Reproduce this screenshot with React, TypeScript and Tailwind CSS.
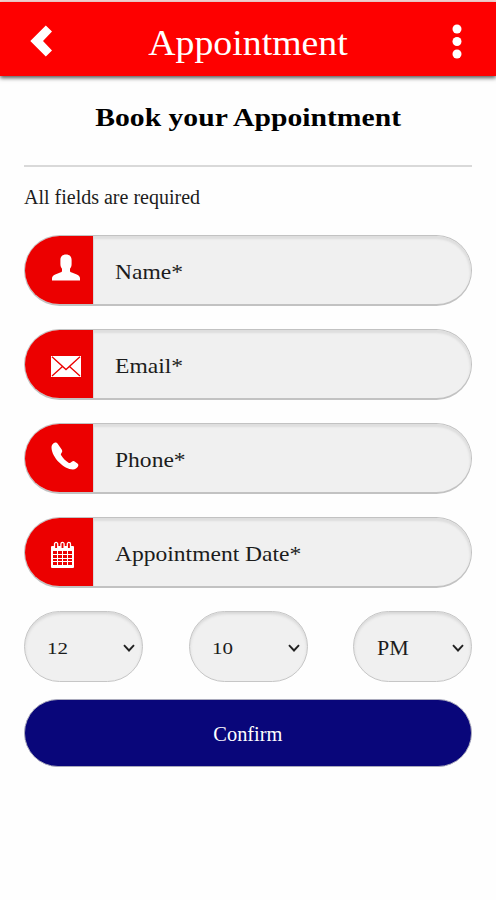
import type { ReactNode } from 'react'
import clsx from 'clsx'

const UserIcon = () => (
  <svg className="ml-[27px] -mt-1.5" width="28" height="27" viewBox="0 0 28 27" fill="#fff">
    <path d="M14 0.5c3.6 0 5.600 2.100 5.600 5.500v4c0 2.200-.6 3.500-1.600 4.700v2c0 1 .6 1.500 1.800 1.900l5 1.900c2.200 1 3.200 2.200 3.200 4.100v1.900H0v-1.900c0-1.900 1-3.100 3.200-4.100l5-1.900c1.200-.4 1.800-.9 1.800-1.900v-2c-1-1.200-1.600-2.500-1.600-4.700V6c0-3.400 2-5.500 5.600-5.500z" />
  </svg>
)

const MailIcon = () => (
  <svg className="ml-[26px] mt-1" width="30" height="21" viewBox="0 0 30 21">
    <path fill="#fff" d="M0 0h30v21H0z" />
    <path d="M1 .8 15 13.500 29 .8M1 20l10.500-9.500M29 20l-10.500-9.500" fill="none" stroke="#ec0000" strokeWidth="1.3" />
  </svg>
)

const PhoneIcon = () => (
  <svg className="ml-[26px] -mt-1" width="28" height="28" viewBox="0 0 28 28" fill="#fff">
    <path d="M3.500.8C1.500 1.600.4 3.400.5 5.700c.3 5 3.200 10.200 7.500 14.600 4.300 4.300 9.300 7.100 13.900 7.200 2.300 0 4.300-1.200 5.200-3.200.5-1.100.3-1.900-.7-2.700l-2.400-1.900c-1-.8-2.200-.8-3.200 0l-1.400 1.100c-.5.4-1 .4-1.500.1-3.300-2-6-4.700-7.900-8-.3-.5-.2-1 .2-1.500l.2-.3c1-1.200 1.100-2.300.3-3.700L6.500 1.600C5.800.4 4.800.2 3.500.8z" />
  </svg>
)

const CalendarIcon = () => (
  <svg className="ml-[26px] mt-1" width="23" height="27" viewBox="0 0 23 27">
    <path fill="#fff" d="M1 5h21a1 1 0 0 1 1 1v20a1 1 0 0 1-1 1H1a1 1 0 0 1-1-1V6a1 1 0 0 1 1-1z" />
    <path fill="#ec0000" d="M2 10h4v3H2zM7 10h4v3H7zM12 10h4v3h-4zM17 10h4v3h-4zM2 14h4v3H2zM7 14h4v3H7zM12 14h4v3h-4zM17 14h4v3h-4zM2 18h4v2H2zM7 18h4v2H7zM12 18h4v2h-4zM17 18h4v2h-4zM2 21h4v3H2zM7 21h4v3H7zM12 21h4v3h-4zM17 21h4v3h-4z" />
    <path d="M3.500 7V3a1.600 1.600 0 0 1 3.200 0V7M9.900 7V3a1.600 1.600 0 0 1 3.200 0V7M16.300 7V3a1.600 1.600 0 0 1 3.200 0V7" fill="#ec0000" stroke="#fff" strokeWidth="1.3" />
  </svg>
)

const fields: { label: string; icon: ReactNode }[] = [
  { label: 'Name*', icon: <UserIcon /> },
  { label: 'Email*', icon: <MailIcon /> },
  { label: 'Phone*', icon: <PhoneIcon /> },
  { label: 'Appointment Date*', icon: <CalendarIcon /> },
]

const times = ['12', '10', 'PM']

export default function App() {
  return (
    <div className="h-[900px] w-[496px] overflow-hidden bg-[#fefefe] pt-0.5 font-['Liberation_Serif',serif] text-[#1c1c1c] shadow-[inset_0_2px_0_#f9d5d2]">
      {/* Header */}
      <header className="flex h-[74px] items-center justify-between bg-[#fe0000] pl-[30px] pr-[34px] text-white shadow-[0_2px_4px_#555]">
        <button aria-label="Back">
          <svg width="22" height="32" viewBox="0 0 22 32" className="mt-1">
            <path d="M15.800 0.500 22 6.500 13 16 22 25.500 15.800 31.500 0.300 16z" fill="#fff" />
          </svg>
        </button>
        <h1 className="mt-2 mr-2 scale-x-[1.05] text-4xl leading-10">Appointment</h1>
        <button aria-label="Menu">
          <svg width="10" height="36" viewBox="0 0 10 36" fill="#fff" className="mt-1.5">
            <circle cx="5" cy="5" r="4.500" />
            <circle cx="5" cy="17.500" r="4.500" />
            <circle cx="5" cy="30" r="4.500" />
          </svg>
        </button>
      </header>

      {/* Form */}
      <main className="px-6">
        <div className="flex h-[91px] justify-center border-b-2 border-[#d9d9d9] pt-[26px]">
          <h2 className="scale-x-[1.14] text-[26px] leading-8 font-bold whitespace-nowrap text-black">
            Book your Appointment
          </h2>
        </div>
        <p className="mt-[18px] h-[50px] text-xl leading-6">All fields are required</p>

        <div className="flex flex-col gap-[23px]">
          {fields.map((field) => (
            <div
              key={field.label}
              className="flex h-[71px] overflow-hidden rounded-full border border-b-2 border-[#c2c2c2] bg-[#f0f0f0]"
            >
              <div className="flex w-[68px] shrink-0 items-center bg-[#ec0000]">{field.icon}</div>
              <div className="flex flex-1 items-center rounded-r-full border-l border-[#d8d8d8] pl-[21px] shadow-[inset_-1px_3px_2px_#dedede]">
                <span className="mt-0.5 origin-left scale-x-[1.07] text-[22px] whitespace-nowrap">{field.label}</span>
              </div>
            </div>
          ))}
        </div>

        <div className="mt-[23px] flex justify-between">
          {times.map((time) => (
            <div
              key={time}
              className="flex h-[71px] w-[119px] items-center justify-between rounded-full border border-[#c6c6c6] bg-[#f0f0f0] pr-[7px] pl-[22px] shadow-[inset_0_2px_3px_#d6d6d6]"
            >
              <span
                className={clsx(
                  'origin-left',
                  time === 'PM' ? 'mt-0.5 ml-px text-[22px]' : 'mt-1 scale-x-[1.2] text-[17.5px]'
                )}
              >
                {time}
              </span>
              <svg width="12" height="8" viewBox="0 0 12 8" className="mt-0.5">
                <path d="M1 1.200 6 6.500 11 1.200" fill="none" stroke="#222" strokeWidth="1.900" />
              </svg>
            </div>
          ))}
        </div>

        <button className="mt-[17px] flex h-[68px] w-full items-center justify-center rounded-full border border-[#a9a9bc] bg-[#09067a] text-xl text-white">
          <span className="mt-0.5 scale-x-[1.02]">Confirm</span>
        </button>
      </main>
    </div>
  )
}
